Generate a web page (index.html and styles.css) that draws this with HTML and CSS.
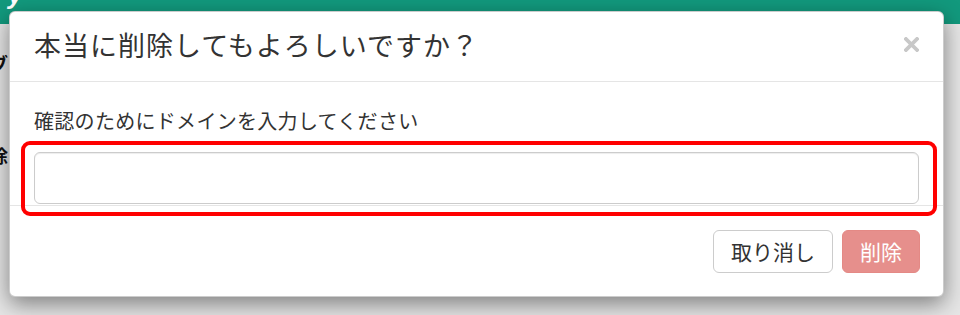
FILE: index.html
```html
<!DOCTYPE html>
<html lang="ja">
<head>
<meta charset="utf-8">
<title>削除の確認</title>
<link rel="stylesheet" href="styles.css">
</head>
<body>
  <header class="topbar"><span class="brand">y</span></header>
  <main class="page">
    <div class="page-line line-one">ブ</div>
    <div class="page-line line-two">除</div>
  </main>

  <div class="modal" role="dialog" aria-modal="true">
    <div class="modal-header">
      <h4 class="modal-title">本当に削除してもよろしいですか？</h4>
      <button class="close" aria-label="閉じる">
        <svg width="15" height="15" viewBox="0 0 15 15"><path d="M2 2 L13 13 M13 2 L2 13" stroke="#c8c8c8" stroke-width="3.8" stroke-linecap="square"/></svg>
      </button>
    </div>
    <div class="modal-body">
      <label class="field-label" for="domain">確認のためにドメインを入力してください</label>
      <input id="domain" class="field-input" type="text">
    </div>
    <div class="modal-footer">
      <button class="btn btn-default">取り消し</button>
      <button class="btn btn-danger" disabled>削除</button>
    </div>
  </div>

  <div class="highlight"></div>
</body>
</html>
```

FILE: styles.css
```css
html, body {
  margin: 0;
  padding: 0;
}

body {
  width: 960px;
  height: 315px;
  overflow: hidden;
  background: #e6e6e6;
  font-family: "Noto Sans CJK JP", "Noto Sans", sans-serif;
  color: #333333;
  position: relative;
}

.topbar {
  height: 24px;
  background: #12997d;
  overflow: hidden;
}

.brand {
  display: block;
  color: #ffffff;
  font: italic bold 26px/26px "Liberation Sans", sans-serif;
  margin: -18px 0 0 8px;
}

.page {
  padding-top: 30px;
}

.page-line {
  font-size: 18px;
  line-height: 18px;
  font-weight: bold;
  color: #111111;
  margin-left: -10px;
}

.line-two {
  margin-top: 74px;
}

.modal {
  position: absolute;
  left: 9px;
  top: 11px;
  width: 935px;
  box-sizing: border-box;
  background: #ffffff;
  border: 1px solid rgba(0, 0, 0, 0.2);
  border-radius: 6px;
  box-shadow: 0 7px 22px rgba(0, 0, 0, 0.45);
}

.modal-header {
  display: flex;
  align-items: center;
  justify-content: space-between;
  padding: 18px 24px 21px;
  border-bottom: 1px solid #e5e5e5;
}

.modal-title {
  margin: 0;
  font-size: 27px;
  line-height: 30px;
  font-weight: normal;
  letter-spacing: 1px;
  color: #333333;
}

.close {
  display: flex;
  padding: 0;
  margin: 0 0 2px 0;
  border: 0;
  background: transparent;
}

.modal-body {
  padding: 25px 24px 1px;
}

.field-label {
  display: block;
  font-size: 20px;
  line-height: 28px;
  letter-spacing: 0.3px;
  color: #333333;
  margin-bottom: 17px;
}

.field-input {
  display: block;
  width: 100%;
  height: 52px;
  box-sizing: border-box;
  margin: 0;
  border: 1px solid #cccccc;
  border-radius: 6px;
  box-shadow: inset 0 1px 1px rgba(0, 0, 0, 0.075);
  background: #ffffff;
}

.modal-footer {
  display: flex;
  justify-content: flex-end;
  gap: 9px;
  padding: 24px 23px 23px;
  border-top: 1px solid #e5e5e5;
}

.btn {
  height: 43px;
  box-sizing: border-box;
  padding: 0 17px;
  border-radius: 6px;
  font-family: "Noto Sans CJK JP", "Noto Sans", sans-serif;
  font-size: 21px;
  line-height: 41px;
}

.btn-default {
  background: #ffffff;
  border: 1px solid #cccccc;
  color: #333333;
}

.btn-danger {
  background: #e68f8c;
  border: 1px solid #e48985;
  color: #ffffff;
}

.highlight {
  position: absolute;
  left: 21px;
  top: 141px;
  width: 916px;
  height: 75px;
  box-sizing: border-box;
  border: 4px solid #ff0000;
  border-radius: 9px;
  pointer-events: none;
}
```
